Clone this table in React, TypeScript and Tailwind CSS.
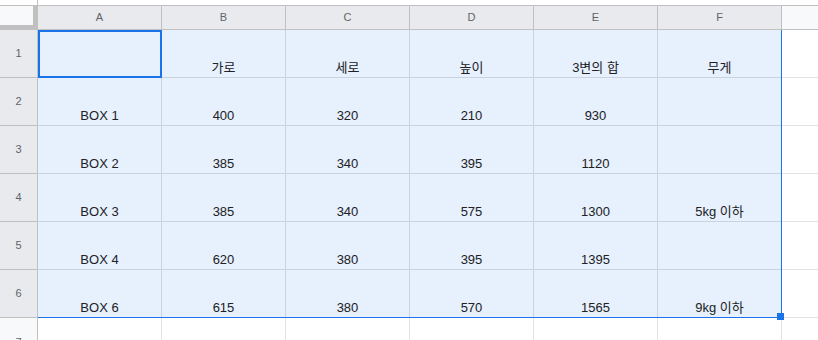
import React from "react";

const cols = ["A", "B", "C", "D", "E", "F"];

const rows: string[][] = [
  ["", "가로", "세로", "높이", "3변의 합", "무게"],
  ["BOX 1", "400", "320", "210", "930", ""],
  ["BOX 2", "385", "340", "395", "1120", ""],
  ["BOX 3", "385", "340", "575", "1300", "5kg 이하"],
  ["BOX 4", "620", "380", "395", "1395", ""],
  ["BOX 6", "615", "380", "570", "1565", "9kg 이하"],
];

const App = () => {
  return (
    <div
      className="relative w-[818px] h-[340px] overflow-hidden bg-white text-[#202124]"
      style={{ fontFamily: '"Liberation Sans", Arial, "Noto Sans CJK KR", sans-serif' }}
    >
      {/* strip above the headers */}
      <div className="flex h-[5px]">
        <div className="w-[38px] border-r border-[#c0c0c0]" />
        <div className="flex-1" />
      </div>

      <div className="grid grid-cols-[38px_repeat(6,124px)_1fr]">
        {/* header row */}
        <div className="h-[25px] bg-[#c0c0c0] border-t border-[#c0c0c0]">
          <div className="w-[33px] h-[19px] bg-[#f8f9fa]" />
        </div>
        {cols.map((c) => (
          <div
            key={c}
            className="h-[25px] flex items-center justify-center bg-[#e8eaed] border-t border-b border-r border-[#c0c0c0] text-[11px] text-[#5f6368]"
          >
            {c}
          </div>
        ))}
        <div className="h-[25px] bg-[#f8f9fa] border-t border-b border-[#c0c0c0]" />

        {/* data rows */}
        {rows.map((r, i) => (
          <React.Fragment key={i}>
            <div className="h-[48px] flex items-center justify-center bg-[#e8eaed] border-r border-b border-[#c0c0c0] text-[11px] text-[#5f6368]">
              {i + 1}
            </div>
            {r.map((v, j) => (
              <div
                key={j}
                className="h-[48px] flex items-end justify-center pb-[1px] bg-[#e7f0fd] border-r border-b border-[#c9d3e2] text-[13px] leading-[17px]"
              >
                {v}
              </div>
            ))}
            <div className="h-[48px] border-b border-[#e2e3e3]" />
          </React.Fragment>
        ))}

        {/* row 7, cut off */}
        <div className="h-[48px] flex items-center justify-center bg-[#f8f9fa] border-r border-[#c0c0c0] text-[11px] text-[#5f6368]">
          7
        </div>
        {cols.map((c) => (
          <div key={c} className="h-[48px] border-r border-[#e2e3e3]" />
        ))}
        <div className="h-[48px]" />
      </div>

      {/* range selection */}
      <div className="absolute left-[38px] top-[30px] w-[744px] h-[288px] border-r border-b border-[#1a73e8]" />
      <div className="absolute left-[38px] top-[30px] w-[124px] h-[48px] border-2 border-[#1a73e8]" />
      <div className="absolute left-[777px] top-[313px] w-[7px] h-[7px] bg-[#1a73e8]" />
    </div>
  );
};

export default App;
